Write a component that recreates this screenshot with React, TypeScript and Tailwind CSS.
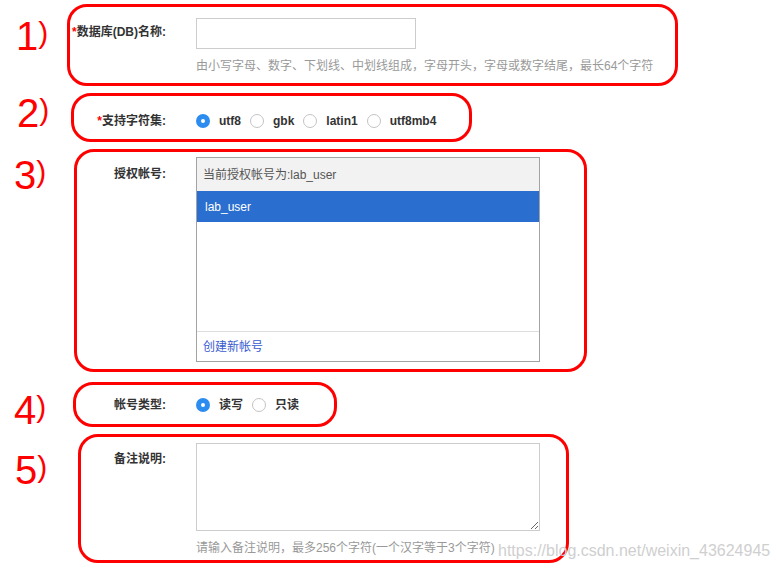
import React from 'react';

const font = "font-['Liberation_Sans','Noto_Sans_CJK_SC',sans-serif]";

const Num: React.FC<{ n: string }> = ({ n }) => (
  <div className="flex items-center leading-none text-[#ff0000]">
    <span className="text-[40px]">{n}</span>
    <span className="text-[30px] mb-[6px]">)</span>
  </div>
);

const Radio: React.FC<{ label: string; checked?: boolean }> = ({ label, checked }) => (
  <label className="flex items-center">
    {checked ? (
      <span className="w-[14px] h-[14px] rounded-full bg-[#2d8cf0] flex items-center justify-center">
        <span className="w-[4px] h-[4px] rounded-full bg-white"></span>
      </span>
    ) : (
      <span className="w-[14px] h-[14px] rounded-full border border-[#c4c4c4] bg-white"></span>
    )}
    <span className="ml-[9px] mr-[9px] text-xs font-bold text-[#333]">{label}</span>
  </label>
);

export default function App() {
  return (
    <div className={`relative w-[776px] h-[572px] bg-white overflow-hidden ${font}`}>
      {/* 1) database name */}
      <div className="flex pt-[4px]">
        <div className="w-[67px] shrink-0 pl-[16px] pt-[12px]"><Num n="1" /></div>
        <div className="w-[611px] h-[82px] shrink-0 border-[3px] border-[#ff0000] rounded-[20px] pt-[11px]">
          <div className="flex">
            <div className="w-[96px] text-right text-xs font-bold text-[#333] leading-[28px]">
              <span className="text-[#ff0000]">*</span>数据库(DB)名称:
            </div>
            <div className="ml-[30px]">
              <input className="block w-[220px] h-[31px] border border-[#cccccc] bg-white outline-none" />
              <p className="mt-[9px] text-xs leading-4 text-[#999]">
                由小写字母、数字、下划线、中划线组成，字母开头，字母或数字结尾，最长64个字符
              </p>
            </div>
          </div>
        </div>
      </div>

      {/* 2) charset */}
      <div className="flex mt-[7px]">
        <div className="w-[71px] shrink-0 pl-[17px]"><Num n="2" /></div>
        <div className="w-[401px] h-[49px] shrink-0 border-[3px] border-[#ff0000] rounded-[20px] pt-[15px]">
          <div className="flex items-center h-[20px]">
            <div className="w-[92px] text-right text-xs font-bold text-[#333]">
              <span className="text-[#ff0000]">*</span>支持字符集:
            </div>
            <div className="ml-[30px] flex items-center">
              <Radio label="utf8" checked />
              <Radio label="gbk" />
              <Radio label="latin1" />
              <Radio label="utf8mb4" />
            </div>
          </div>
        </div>
      </div>

      {/* 3) account */}
      <div className="flex mt-[7px]">
        <div className="w-[74px] shrink-0 pl-[14px] pt-[6px]"><Num n="3" /></div>
        <div className="w-[513px] h-[223px] shrink-0 border-[3px] border-[#ff0000] rounded-[20px] pt-[5px]">
          <div className="flex">
            <div className="w-[89px] pt-[9px] text-right text-xs leading-4 font-bold text-[#333]">授权帐号:</div>
            <div className="ml-[30px] w-[344px] h-[205px] border border-[#a3a3a3] flex flex-col text-xs">
              <div className="h-[33px] bg-[#f2f2f2] pl-[6px] flex items-center text-[#555]">当前授权帐号为:lab_user</div>
              <div className="h-[31px] bg-[#2a6ecf] pl-[8px] flex items-center text-white">lab_user</div>
              <div className="flex-1"></div>
              <div className="h-[30px] border-t border-[#dddddd] pl-[6px] flex items-center">
                <a href="#" className="text-[#3a5bd0]">创建新帐号</a>
              </div>
            </div>
          </div>
        </div>
      </div>

      {/* 4) account type */}
      <div className="flex mt-[10px] h-[45px]">
        <div className="w-[73px] h-[45px] shrink-0 pl-[14px] pt-[8px]"><Num n="4" /></div>
        <div className="w-[264px] h-[45px] shrink-0 border-[3px] border-[#ff0000] rounded-[20px] pt-[10px]">
          <div className="flex items-center h-[20px]">
            <div className="w-[90px] text-right text-xs font-bold text-[#333]">帐号类型:</div>
            <div className="ml-[30px] flex items-center">
              <Radio label="读写" checked />
              <Radio label="只读" />
            </div>
          </div>
        </div>
      </div>

      {/* 5) remark */}
      <div className="flex mt-[7px]">
        <div className="w-[78px] shrink-0 pl-[15px] pt-[16px]"><Num n="5" /></div>
        <div className="w-[491px] h-[129px] shrink-0 border-[3px] border-[#ff0000] rounded-[20px] pt-[6px]">
          <div className="flex">
            <div className="w-[85px] pt-[8px] text-right text-xs leading-4 font-bold text-[#333]">备注说明:</div>
            <div className="ml-[30px]">
              <textarea className="block w-[344px] h-[88px] border border-[#cccccc] bg-white outline-none"></textarea>
              <p className="mt-[9px] text-xs leading-4 text-[#999]">请输入备注说明，最多256个字符(一个汉字等于3个字符)</p>
            </div>
          </div>
        </div>
      </div>

      {/* watermark */}
      <div className="absolute left-[498px] top-[543px] text-[16px] leading-4 text-[#cfcfcf]">
        https://blog.csdn.net/weixin_43624945
      </div>
    </div>
  );
}
